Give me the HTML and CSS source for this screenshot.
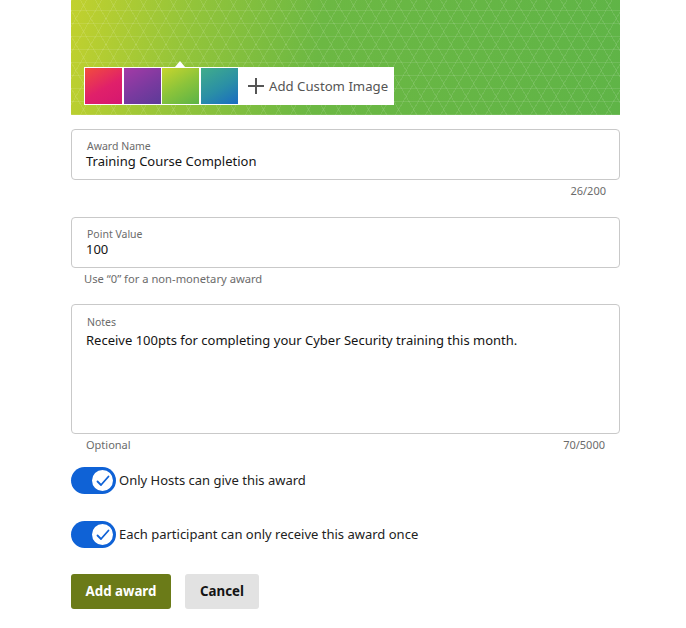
FILE: index.html
```html
<!DOCTYPE html>
<html>
<head>
<meta charset="utf-8">
<link rel="stylesheet" href="styles.css">
</head>
<body>
<div class="page">
  <div class="banner">
    <div class="picker">
      <span class="caret"></span>
      <div class="swatch s1"></div>
      <div class="swatch s2"></div>
      <div class="swatch s3"></div>
      <div class="swatch s4"></div>
      <div class="add-custom">
        <svg class="plus" width="18" height="18" viewBox="0 0 18 18"><path d="M9 1v16M1 9h16" stroke="#555" stroke-width="2" fill="none"/></svg>
        <span>Add Custom Image</span>
      </div>
    </div>
  </div>

  <div class="field f-name">
    <div class="label">Award Name</div>
    <div class="value">Training Course Completion</div>
  </div>
  <div class="meta right">26/200</div>

  <div class="field f-points">
    <div class="label">Point Value</div>
    <div class="value">100</div>
  </div>
  <div class="meta helper">Use “0” for a non-monetary award</div>

  <div class="field f-notes">
    <div class="label">Notes</div>
    <div class="value notes-text">Receive 100pts for completing your Cyber Security training this month.</div>
  </div>
  <div class="meta split"><span>Optional</span><span>70/5000</span></div>

  <div class="toggle-row first">
    <span class="toggle"><span class="knob"><svg width="14" height="12" viewBox="0 0 14 12"><path d="M1.5 6.5l3.5 3.5L12.5 1.5" stroke="#0f62d6" stroke-width="1.8" fill="none" stroke-linecap="round" stroke-linejoin="round"/></svg></span></span>
    <span class="toggle-label">Only Hosts can give this award</span>
  </div>
  <div class="toggle-row second">
    <span class="toggle"><span class="knob"><svg width="14" height="12" viewBox="0 0 14 12"><path d="M1.5 6.5l3.5 3.5L12.5 1.5" stroke="#0f62d6" stroke-width="1.8" fill="none" stroke-linecap="round" stroke-linejoin="round"/></svg></span></span>
    <span class="toggle-label">Each participant can only receive this award once</span>
  </div>

  <div class="actions">
    <button class="btn primary">Add award</button>
    <button class="btn secondary">Cancel</button>
  </div>
</div>
</body>
</html>
```

FILE: styles.css
```css
html, body {
  margin: 0;
  padding: 0;
  background: #fff;
}
body {
  font-family: "Noto Sans", "Open Sans", sans-serif;
  color: #1a1a1a;
}
.page {
  margin-left: 71px;
  width: 549px;
}
.banner {
  height: 115px;
  box-sizing: border-box;
  padding: 67px 0 0 13px;
  background-color: #62b546;
  background-image:
    repeating-linear-gradient(0deg, rgba(255,255,255,0.10) 0 1px, transparent 1px 13px),
    repeating-linear-gradient(60deg, rgba(255,255,255,0.10) 0 1px, transparent 1px 13px),
    repeating-linear-gradient(120deg, rgba(255,255,255,0.10) 0 1px, transparent 1px 13px),
    linear-gradient(100deg, #c2d12e 0%, #92c43a 22%, #6cb843 45%, #5fb447 100%);
}
.picker {
  position: relative;
  display: flex;
  align-items: center;
  width: 310px;
  height: 38px;
  box-sizing: border-box;
  padding: 1px;
  gap: 1.5px;
  background: #fff;
}
.caret {
  position: absolute;
  left: 91px;
  top: -6px;
  width: 0;
  height: 0;
  border-left: 5px solid transparent;
  border-right: 5px solid transparent;
  border-bottom: 6px solid #fff;
}
.swatch {
  width: 37px;
  height: 36px;
  flex: none;
}
.s1 { background: linear-gradient(150deg, #f24d3c 0%, #e0206a 55%, #d51770 100%); }
.s2 { background: linear-gradient(150deg, #a43aa6 0%, #7a3a9f 55%, #5c3b98 100%); }
.s3 { background: linear-gradient(150deg, #c8d52d 0%, #8cc43a 50%, #5bb347 100%); }
.s4 { background: linear-gradient(150deg, #41ad8a 0%, #2a8fa6 55%, #1a6bc2 100%); }
.add-custom {
  display: flex;
  align-items: center;
  margin-left: 8px;
  gap: 4px;
  font-size: 13.2px;
  color: #555;
}
.plus { display: block; }

.field {
  box-sizing: border-box;
  border: 1px solid #c9c9c9;
  border-radius: 4px;
  padding: 9px 15px 0 15px;
}
.f-name { margin-top: 14px; height: 51px; }
.f-points { margin-top: 19px; height: 51px; }
.f-notes { margin-top: 18px; height: 130px; padding-top: 10px; }
.label {
  font-size: 10.5px;
  line-height: 14px;
  color: #6b6b6b;
}
.value {
  font-size: 13px;
  line-height: 17px;
  color: #141414;
  margin-left: -1px;
}
.notes-text { margin-top: 3px; }
.meta {
  margin-top: 4px;
  font-size: 11px;
  line-height: 14px;
  color: #6b6b6b;
}
.meta.right { text-align: right; padding-right: 14px; }
.meta.helper { padding-left: 13px; font-size: 11.2px; }
.meta.split {
  display: flex;
  justify-content: space-between;
  padding: 0 15px 0 15px;
}
.toggle-row {
  display: flex;
  align-items: center;
  gap: 3px;
}
.toggle-row.first { margin-top: 15px; }
.toggle-row.second { margin-top: 27px; }
.toggle {
  display: flex;
  align-items: center;
  justify-content: flex-end;
  width: 45px;
  height: 27px;
  box-sizing: border-box;
  padding-right: 1px;
  border-radius: 14px;
  background: #0f62d6;
}
.knob {
  display: flex;
  align-items: center;
  justify-content: center;
  width: 25px;
  height: 25px;
  box-sizing: border-box;
  border: 2px solid #0f62d6;
  border-radius: 50%;
  background: #fff;
}
.toggle-label {
  font-size: 13px;
  color: #222;
  padding-bottom: 2px;
}
.actions {
  display: flex;
  gap: 14px;
  margin-top: 26px;
}
.btn {
  height: 35px;
  border: none;
  border-radius: 3px;
  font-family: "Noto Sans", "Open Sans", sans-serif;
  font-weight: 700;
  font-size: 13.3px;
  padding: 0 0 2px 0;
}
.primary {
  width: 100px;
  background: #6b7b18;
  color: #fff;
}
.secondary {
  width: 74px;
  background: #e2e2e2;
  color: #141414;
}
```
